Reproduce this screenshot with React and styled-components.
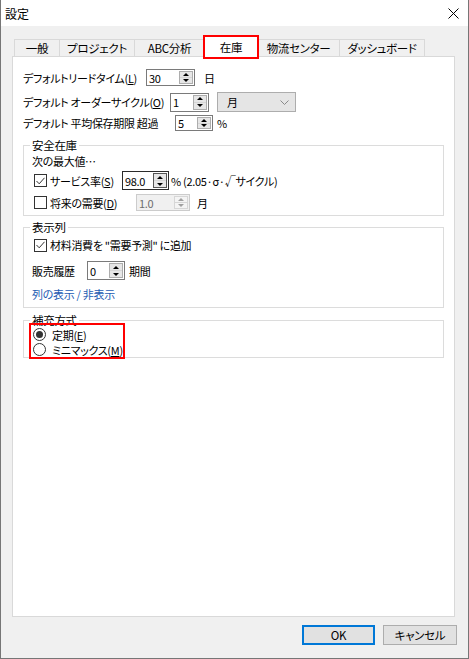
import React from "react";
import styled, { createGlobalStyle } from "styled-components";

const GlobalStyle = createGlobalStyle`
  html, body { margin: 0; padding: 0; background: #fff; }
  body {
    font-family: "Noto Sans CJK JP", "Liberation Sans", sans-serif;
    font-size: 11px;
    letter-spacing: -0.3px;
    color: #000;
    font-feature-settings: "palt";
  }
  * { box-sizing: border-box; }
`;

const Window = styled.div`
  width: 469px;
  height: 659px;
  border: 1px solid #767676;
  border-top: none;
  display: flex;
  flex-direction: column;
  background: #f0f0f0;
`;

const TitleBar = styled.div`
  height: 26px;
  background: #fff;
  display: flex;
  align-items: center;
  justify-content: space-between;
  padding: 0 9px 0 4px;
  font-size: 12px;
  letter-spacing: 0;
`;

const Body = styled.div`
  flex: 1;
  display: flex;
  flex-direction: column;
  padding: 9px 13px 0 11px;
`;

const TabBar = styled.div`
  display: flex;
  align-items: flex-end;
  height: 21px;
  padding-left: 2px;
  font-size: 11.5px;
`;

const Tab = styled.div`
  width: ${(p) => p.$w}px;
  height: 17px;
  margin-left: -1px;
  border: 1px solid #d9d9d9;
  border-bottom: none;
  background: #f0f0f0;
  display: flex;
  align-items: center;
  justify-content: center;
  &:first-child { margin-left: 0; }
`;

const ActiveTab = styled.div`
  width: ${(p) => p.$w}px;
  height: 24px;
  margin: 0 -1px -3px -2px;
  border: 2px solid #ff0000;
  background: #fff;
  position: relative;
  z-index: 1;
  display: flex;
  align-items: center;
  justify-content: center;
`;

const Panel = styled.div`
  height: 561px;
  border: 1px solid #d9d9d9;
  background: #fff;
  display: flex;
  flex-direction: column;
  padding: 0 10px;
`;

const Row = styled.div`
  display: flex;
  align-items: center;
  height: ${(p) => p.$h}px;
  margin-top: ${(p) => p.$mt || 0}px;
  white-space: nowrap;
`;

const Label = styled.span`
  width: ${(p) => (p.$w ? `${p.$w}px` : "auto")};
  flex-shrink: 0;
`;

const Group = styled.fieldset`
  margin: ${(p) => p.$mt}px 0 0 0;
  border: 1px solid #dcdcdc;
  padding: 0 8px ${(p) => p.$pb}px 8px;
  min-width: 0;
  display: flex;
  flex-direction: column;
`;

const Legend = styled.legend`
  padding: 0 2px;
  margin-left: -2px;
  line-height: 16px;
  height: 16px;
  font-size: 11.5px;
`;

const Spin = styled.div`
  display: flex;
  flex-shrink: 0;
  width: ${(p) => p.$w}px;
  height: ${(p) => p.$h}px;
  border: 1px solid ${(p) => (p.$dark ? "#2b2b2b" : p.$disabled ? "#cccccc" : "#7a7a7a")};
  background: ${(p) => (p.$disabled ? "#f0f0f0" : "#fff")};
  color: ${(p) => (p.$disabled ? "#6d6d6d" : "#000")};
`;

const SpinValue = styled.span`
  flex: 1;
  display: flex;
  align-items: center;
  padding-left: 2px;
`;

const SpinButtons = styled.div`
  width: 14px;
  margin: 1px;
  border: 1px solid ${(p) => (p.$dark ? "#555" : p.$disabled ? "#d6d6d6" : "#adadad")};
  background: ${(p) => (p.$disabled ? "#f4f4f4" : "#e6e6e6")};
  display: flex;
  flex-direction: column;
`;

const SpinHalf = styled.div`
  flex: 1;
  display: flex;
  align-items: center;
  justify-content: center;
  & + & { border-top: 1px solid ${(p) => (p.$disabled ? "#d6d6d6" : "#adadad")}; }
`;

const Arrow = styled.span`
  width: 0;
  height: 0;
  border-left: 3px solid transparent;
  border-right: 3px solid transparent;
  ${(p) => (p.$up ? "border-bottom" : "border-top")}: 3px solid ${(p) => (p.$disabled ? "#a0a0a0" : "#000")};
`;

const Combo = styled.div`
  width: ${(p) => p.$w}px;
  height: 20px;
  margin-left: ${(p) => p.$ml}px;
  border: 1px solid #adadad;
  background: #e5e5e5;
  display: flex;
  align-items: center;
  justify-content: space-between;
  padding: 0 6px 0 9px;
`;

const Suffix = styled.span`
  margin-left: ${(p) => p.$ml}px;
`;

const Box = styled.span`
  width: 13px;
  height: 13px;
  margin: 0 3px 0 2px;
  border: 1px solid #333;
  background: #fff;
  display: inline-flex;
  align-items: center;
  justify-content: center;
  flex-shrink: 0;
`;

const Radio = styled.span`
  width: 13px;
  height: 13px;
  margin-right: 6px;
  border: 1px solid #333;
  border-radius: 50%;
  background: #fff;
  display: inline-flex;
  align-items: center;
  justify-content: center;
  flex-shrink: 0;
  &::after {
    content: "";
    width: 7px;
    height: 7px;
    border-radius: 50%;
    background: ${(p) => (p.$on ? "#333" : "transparent")};
  }
`;

const Highlight = styled.div`
  width: 96px;
  margin: -5px 0 -2px -3px;
  border: 2px solid #ff0000;
  padding: 2px 0 0 2px;
  position: relative;
  display: flex;
  flex-direction: column;
`;

const Link = styled.span`
  color: #1c5bb3;
`;

const ButtonRow = styled.div`
  display: flex;
  justify-content: flex-end;
  gap: 8px;
  margin: 8px -2px 0 0;
  font-size: 11.5px;
`;

const Button = styled.div`
  width: ${(p) => p.$w}px;
  height: 20px;
  border: ${(p) => (p.$primary ? "2px solid #0078d7" : "1px solid #adadad")};
  background: #e1e1e1;
  display: flex;
  align-items: center;
  justify-content: center;
`;

const SpinInput = ({ value, w, h, dark, disabled }) => (
  <Spin $w={w} $h={h} $dark={dark} $disabled={disabled}>
    <SpinValue>{value}</SpinValue>
    <SpinButtons $dark={dark} $disabled={disabled}>
      <SpinHalf $disabled={disabled}><Arrow $up $disabled={disabled} /></SpinHalf>
      <SpinHalf $disabled={disabled}><Arrow $disabled={disabled} /></SpinHalf>
    </SpinButtons>
  </Spin>
);

const Check = ({ on }) => (
  <Box>
    {on && (
      <svg width="9" height="8" viewBox="0 0 9 8">
        <polyline points="0.5,4 3.2,6.8 8.5,0.8" fill="none" stroke="#333" strokeWidth="1" />
      </svg>
    )}
  </Box>
);

const tabs = [
  { label: "一般", w: 46 },
  { label: "プロジェクト", w: 76 },
  { label: "ABC分析", w: 71 },
  { label: "在庫", w: 56, active: true },
  { label: "物流センター", w: 83 },
  { label: "ダッシュボード", w: 86 },
];

export default function App() {
  return (
    <>
      <GlobalStyle />
      <Window>
        <TitleBar>
          <span>設定</span>
          <svg width="11" height="11" viewBox="0 0 11 11">
            <path d="M0.5 0.5 L10.5 10.5 M10.5 0.5 L0.5 10.5" stroke="#000" strokeWidth="1" />
          </svg>
        </TitleBar>
        <Body>
          <TabBar>
            {tabs.map((t) =>
              t.active ? (
                <ActiveTab key={t.label} $w={t.w}>{t.label}</ActiveTab>
              ) : (
                <Tab key={t.label} $w={t.w}>{t.label}</Tab>
              )
            )}
          </TabBar>
          <Panel>
            <Row $h={17} $mt={12}>
              <Label $w={123}>デフォルトリードタイム(<u>L</u>)</Label>
              <SpinInput value="30" w={49} h={17} />
              <Suffix $ml={9}>日</Suffix>
            </Row>
            <Row $h={20} $mt={6}>
              <Label $w={147}>デフォルト オーダーサイクル(<u>O</u>)</Label>
              <SpinInput value="1" w={39} h={19} />
              <Combo $w={79} $ml={8}>
                <span>月</span>
                <svg width="9" height="5" viewBox="0 0 9 5">
                  <polyline points="0.5,0.5 4.5,4.5 8.5,0.5" fill="none" stroke="#8a8a8a" strokeWidth="1" />
                </svg>
              </Combo>
            </Row>
            <Row $h={16} $mt={3}>
              <Label $w={152}>デフォルト 平均保存期限 超過</Label>
              <SpinInput value="5" w={38} h={16} />
              <Suffix $ml={4}>%</Suffix>
            </Row>

            <Group $mt={6} $pb={4}>
              <Legend>安全在庫</Legend>
              <Row $h={15}>次の最大値…</Row>
              <Row $h={19} $mt={3}>
                <Check on />
                <Label $w={72}>サービス率(<u>S</u>)</Label>
                <SpinInput value="98.0" w={47} h={19} dark />
                <Suffix $ml={2}>% (2.05·σ·√サイクル)</Suffix>
              </Row>
              <Row $h={17} $mt={4}>
                <Check />
                <Label $w={86}>将来の需要(<u>D</u>)</Label>
                <SpinInput value="1.0" w={54} h={17} disabled />
                <Suffix $ml={7}>月</Suffix>
              </Row>
            </Group>

            <Group $mt={3} $pb={5}>
              <Legend>表示列</Legend>
              <Row $h={16} $mt={2}>
                <Check on />
                <span>材料消費を "需要予測" に追加</span>
              </Row>
              <Row $h={19} $mt={8}>
                <Label $w={55}>販売履歴</Label>
                <SpinInput value="0" w={38} h={19} />
                <Suffix $ml={4}>期間</Suffix>
              </Row>
              <Row $h={16} $mt={6}>
                <Link>列の表示 / 非表示</Link>
              </Row>
            </Group>

            <Group $mt={4} $pb={0}>
              <Legend>補充方式</Legend>
              <Highlight>
                <Row $h={15}>
                  <Radio $on />
                  <span>定期(<u>E</u>)</span>
                </Row>
                <Row $h={15}>
                  <Radio />
                  <span>ミニマックス(<u>M</u>)</span>
                </Row>
              </Highlight>
            </Group>
          </Panel>
          <ButtonRow>
            <Button $w={73} $primary>OK</Button>
            <Button $w={74}>キャンセル</Button>
          </ButtonRow>
        </Body>
      </Window>
    </>
  );
}
